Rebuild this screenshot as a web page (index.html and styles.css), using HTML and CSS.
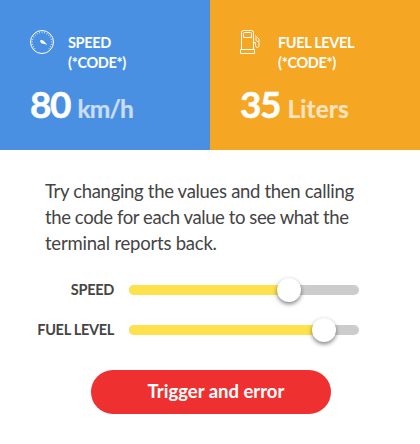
FILE: index.html
```html
<!DOCTYPE html>
<html lang="en">
<head>
<meta charset="utf-8">
<title>Vehicle status</title>
<link rel="stylesheet" href="styles.css">
</head>
<body>
<header class="stats">
  <section class="stat speed">
    <div class="stat-head">
      <svg class="icon" width="26" height="26" viewBox="0 0 26 26"><circle cx="12" cy="12" r="11.500"/><path d="M5 19A9.800 9.800 0 1 1 19 19" stroke-width="1.600" stroke-dasharray=".8 1.700" opacity=".75"/><path class="solid" d="M10.300 10.300Q11.500 9.500 13.200 10.500L17.300 14.800L11.500 13.200Q9.500 12 10.300 10.300Z"/></svg>
      <h2>SPEED<br>(*CODE*)</h2>
    </div>
    <p class="value">80 <span class="kmh">km/h</span></p>
  </section>
  <section class="stat fuel">
    <div class="stat-head">
      <svg class="icon" width="26" height="26" viewBox="0 0 26 26"><path d="M1.500 19.500V2.500Q1.500 .5 3.500 .5H11.500Q13.500 .5 13.500 2.500V19.500M.5 19.500H14.500V23.500H.5ZM4.500 2.500H10.500Q11.500 2.500 11.500 3.500V7.500H3.500V3.500Q3.500 2.500 4.500 2.500Z"/><path d="M15 5.500L19 9V15.500Q19 17.500 17.300 17.500T15.500 15.500V12.500H13.500M16 7.500V10.500L19 12" stroke-width=".9"/></svg>
      <h2>FUEL LEVEL<br>(*CODE*)</h2>
    </div>
    <p class="value">35 <span class="liters">Liters</span></p>
  </section>
</header>
<main>
  <p class="intro">Try changing the values and then calling<br><span class="snug">the code for each value to see what the</span><br><span class="loose">terminal reports back.</span></p>
  <div class="control"><label>SPEED</label><div class="track speed-track"><div class="fill"></div><div class="thumb"></div></div></div>
  <div class="control"><label>FUEL LEVEL</label><div class="track fuel-track"><div class="fill"></div><div class="thumb"></div></div></div>
  <button>Trigger and error</button>
</main>
</body>
</html>
```
FILE: styles.css
```css
* { box-sizing: border-box; }
body { margin: 0; font-family: Lato, sans-serif; background: #fff; color: #444; }
h2, p { margin: 0; }
.stats { display: grid; grid-template-columns: 1fr 1fr; height: 150px; color: #fff; }
.stat { padding: 30px 30px 0; }
.speed { background: #4a90e2; }
.fuel { background: #f5a623; }
.stat-head { display: flex; gap: 12px; height: 50px; }
.icon { flex: none; fill: none; stroke: #fff; stroke-width: 1; }
.icon .solid { fill: #fff; stroke: none; }
h2 { font-size: 14.5px; line-height: 20px; font-weight: 700; padding-top: 3px; letter-spacing: -.35px; white-space: nowrap; }
.value { font-size: 37px; line-height: 48px; font-weight: 700; letter-spacing: -1.5px; white-space: nowrap; -webkit-text-stroke: .5px #fff; }
.value span { font-size: 24.5px; opacity: .7; -webkit-text-stroke: .2px #fff; }
.value .kmh { letter-spacing: -.8px; }
.value .liters { letter-spacing: .1px; }
.intro { margin: 28px 0 0 45px; font-size: 18.5px; line-height: 26px; letter-spacing: -.31px; white-space: nowrap; }
.snug { letter-spacing: -.4px; }
.loose { letter-spacing: -.22px; }
.control { display: flex; align-items: center; height: 40px; gap: 15px; }
.intro + .control { margin-top: 14px; }
label { width: 114px; padding-bottom: 1px; text-align: right; font-size: 14.5px; font-weight: 700; letter-spacing: -.3px; white-space: nowrap; }
.track { display: flex; align-items: center; width: 230px; height: 10px; border-radius: 5px; background: #ccc; }
.fill { height: 10px; border-radius: 5px 0 0 5px; background: #ffe14d; }
.speed-track .fill { width: 160px; }
.fuel-track .fill { width: 195px; }
.thumb { flex: none; width: 24px; height: 24px; margin-left: -12px; border-radius: 50%; background: #fff; box-shadow: 0 2px 4px rgba(0,0,0,.5); }
button { display: block; width: 240px; height: 44px; margin: 20px 0 0 91px; padding: 0 0 2px 10px; border: 0; border-radius: 22px; background: #ee3030; color: #fff; font: 700 18.5px Lato, sans-serif; }
```
